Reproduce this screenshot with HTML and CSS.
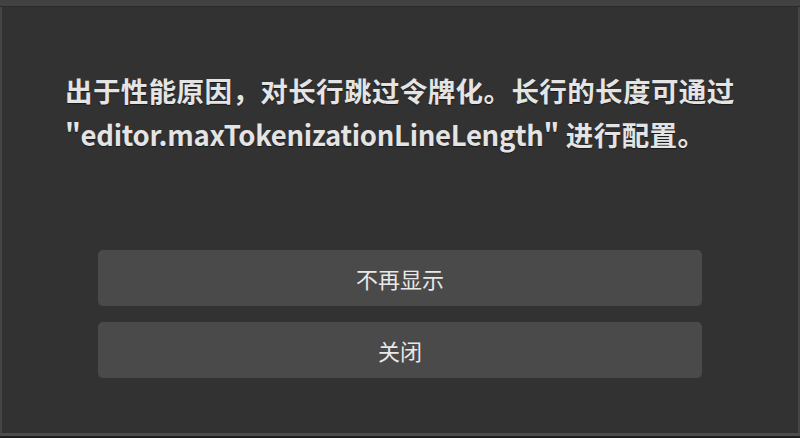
FILE: index.html
```html
<!DOCTYPE html>
<html lang="zh-CN">
<head>
<meta charset="utf-8">
<link rel="stylesheet" href="styles.css">
</head>
<body>
<div class="frame">
  <div class="topbar"></div>
  <div class="dialog">
    <p class="message">出于性能原因，对长行跳过令牌化。长行的长度可通过 <span class="code">"editor.maxTokenizationLineLength"</span> 进行配置。</p>
    <div class="actions">
      <button class="btn">不再显示</button>
      <button class="btn">关闭</button>
    </div>
  </div>
  <div class="bottombar"></div>
</div>
</body>
</html>
```
FILE: styles.css
```css
html, body {
  margin: 0;
  padding: 0;
  width: 800px;
  height: 438px;
  background: #1e1e1e;
  overflow: hidden;
}
.frame {
  width: 800px;
  height: 438px;
  display: flex;
  flex-direction: column;
  font-family: "Noto Sans CJK SC", "Noto Sans", sans-serif;
}
.topbar {
  height: 6px;
  background: #424242;
  border-bottom: 1px solid #2a2a2a;
  flex: none;
}
.dialog {
  flex: 1;
  background: #323232;
  border-left: 2px solid #454545;
  border-right: 2px solid #454545;
  padding: 0 96px;
  display: flex;
  flex-direction: column;
}
.message {
  margin: 61px -40px 0 -33px;
  color: #e4e4e4;
  font-size: 27.5px;
  font-weight: 700;
  line-height: 44px;
  letter-spacing: 0.4px;
  text-shadow: 0 1px 1px rgba(0,0,0,0.5);
}
.code {
  letter-spacing: -0.3px;
}
.actions {
  margin-top: 94px;
  display: flex;
  flex-direction: column;
  gap: 16px;
}
.btn {
  height: 56px;
  border: none;
  border-radius: 5px;
  background: #4a4a4a;
  color: #e8e8e8;
  font-family: "Noto Sans CJK SC", "Noto Sans", sans-serif;
  font-size: 22px;
  padding: 0;
}
.bottombar {
  height: 3px;
  background: #4c4c4c;
  border-bottom: 2px solid #1e1e1e;
  flex: none;
}
```
